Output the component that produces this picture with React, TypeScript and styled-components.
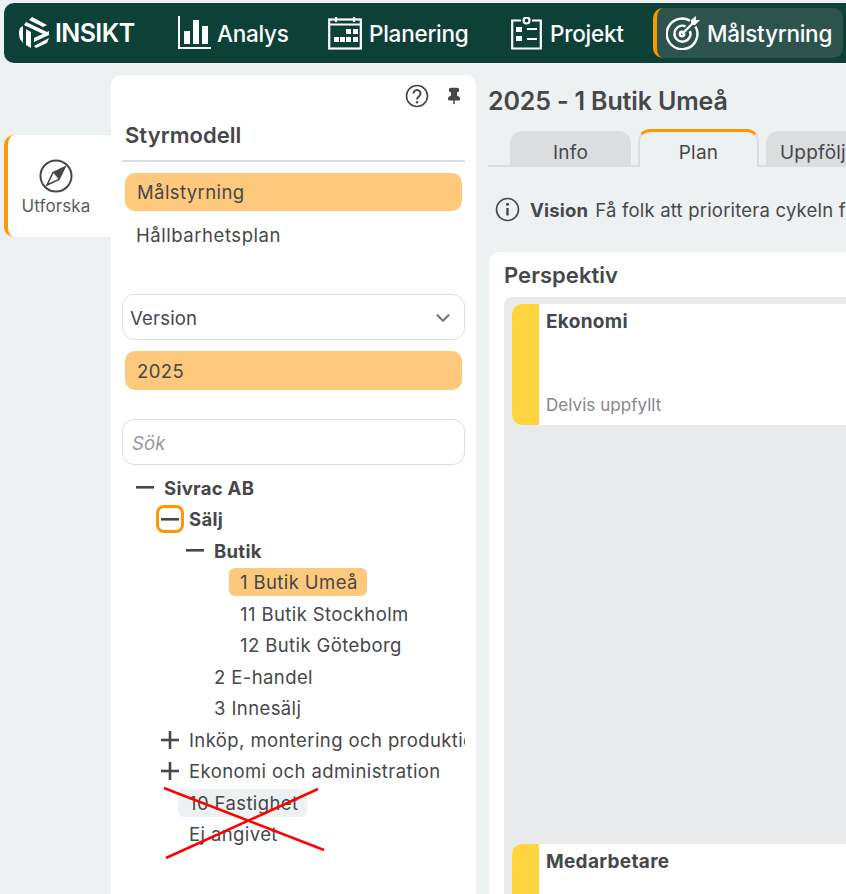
import React from 'react';
import styled, { createGlobalStyle } from 'styled-components';
import { ChevronDown, Pin } from 'lucide-react';

const ink = '#45474a';
const accent = '#ff9800';
const soft = '#fec97c';

const Global = createGlobalStyle`
    html, body {
        margin: 0;
        height: 100%;
        background: #eef1f2;
        overflow: hidden;
    }
    body {
        font-family: Inter, "Noto Sans", sans-serif;
        color: ${ink};
    }
    * { box-sizing: border-box; }
    svg { flex: none; }
`;

const Page = styled.div`
    width: 846px;
    height: 894px;
    padding-top: 3px;
    overflow: hidden;
`;

const Header = styled.header`
    display: flex;
    align-items: center;
    height: 60px;
    margin-left: 4px;
    padding-left: 14px;
    background: #0d4036;
    border-radius: 10px 0 0 10px;
    color: #fff;
`;

const Brand = styled.div`
    display: flex;
    align-items: center;
    gap: 5px;
    width: 159px;
    font-size: 25px;
    font-weight: 600;
    letter-spacing: -0.6px;
`;

const NavItem = styled.div<{ $width: number; $gap: number; $active?: boolean }>`
    display: flex;
    align-items: center;
    gap: ${p => p.$gap}px;
    width: ${p => p.$width}px;
    height: 50px;
    font-size: 22.5px;
    font-weight: 500;
    letter-spacing: -0.25px;
    white-space: nowrap;
    ${p => p.$active && `
        padding-left: 9px;
        background: #2c544d;
        border-left: 4px solid ${accent};
        border-radius: 10px;
    `}
`;

const Main = styled.main`
    display: flex;
    height: 831px;
    margin-top: 12px;
`;

const Rail = styled.nav`
    flex: none;
    width: 107px;
    margin-left: 4px;
    padding-top: 60px;
`;

const RailTab = styled.div`
    display: flex;
    flex-direction: column;
    align-items: center;
    gap: 3px;
    height: 102px;
    padding: 24px 7px 0 0;
    background: #fff;
    border-left: 4px solid ${accent};
    border-radius: 10px 0 0 10px;
    font-size: 17px;
    letter-spacing: 0.1px;
    color: #5a5c60;
`;

const Panel = styled.aside`
    flex: none;
    width: 365px;
    padding: 9px 11px 0;
    background: #fff;
    border-radius: 10px 10px 0 0;
`;

const PanelTools = styled.div`
    display: flex;
    justify-content: flex-end;
    align-items: center;
    gap: 16px;
    height: 24px;
    padding-right: 2px;
`;

const PanelTitle = styled.h2`
    margin: 13px 0 11px;
    height: 41px;
    padding-left: 3px;
    font-size: 22px;
    line-height: 28px;
    font-weight: 600;
    letter-spacing: 0.05px;
    border-bottom: 2px solid #dcdddf;
`;

const Pill = styled.div<{ $height: number }>`
    display: flex;
    align-items: center;
    height: ${p => p.$height}px;
    margin: 0 3px;
    padding-left: 12px;
    background: ${soft};
    border-radius: 10px;
    font-size: 18.5px;
    letter-spacing: 0.4px;
`;

const MenuItem = styled.div`
    display: flex;
    align-items: center;
    height: 38px;
    margin: 5px 3px 40px;
    padding-left: 11px;
    font-size: 18.5px;
    letter-spacing: 0.55px;
`;

const Field = styled.div<{ $muted?: boolean }>`
    display: flex;
    align-items: center;
    justify-content: space-between;
    height: 46px;
    padding: 1px 10px 0 7px;
    border: 1.5px solid #dcdddf;
    border-radius: 12px;
    font-size: 18.5px;
    letter-spacing: 0.2px;
    ${p => p.$muted && `
        padding-left: 9px;
        color: #96989c;
        font-style: italic;
    `}
`;

const FieldGap = styled.div<{ $height: number }>`
    height: ${p => p.$height}px;
`;

const Tree = styled.div`
    position: relative;
    margin-top: 7px;
`;

const Row = styled.div<{ $depth: number }>`
    display: flex;
    align-items: center;
    height: 31.5px;
    padding-left: ${p => p.$depth}px;
    overflow: hidden;
    white-space: nowrap;
    width: 343px;
    font-size: 18.5px;
    letter-spacing: 0.4px;
`;

const Toggle = styled.span<{ $focus?: boolean }>`
    display: flex;
    align-items: center;
    justify-content: center;
    flex: none;
    width: 28px;
    height: 28px;
    margin-right: 5px;
    border-radius: 8px;
    ${p => p.$focus && `border: 3px solid ${accent};`}
`;

const Label = styled.span<{ $bold?: boolean; $bg?: string }>`
    font-weight: ${p => (p.$bold ? 700 : 400)};
    ${p => p.$bold && 'letter-spacing: 0.3px;'}
    ${p => p.$bg && `
        margin-left: -11px;
        padding: 3px 9px 3px 11px;
        background: ${p.$bg};
        border-radius: 6px;
    `}
`;

const Cross = styled.svg`
    position: absolute;
    left: 41px;
    top: 315px;
    pointer-events: none;
`;

const Content = styled.section`
    flex: none;
    width: 370px;
    padding-left: 12px;
`;

const Title = styled.h1`
    margin: 0;
    height: 54px;
    padding-top: 11px;
    font-size: 25px;
    line-height: 30px;
    font-weight: 600;
    letter-spacing: -0.15px;
    white-space: nowrap;
`;

const Tabs = styled.div`
    display: flex;
    align-items: flex-end;
    gap: 7px;
    height: 38px;
    padding-left: 22px;
    border-bottom: 2px solid #dcdddf;
`;

const Tab = styled.div<{ $active?: boolean }>`
    flex: none;
    min-width: 121px;
    height: ${p => (p.$active ? 38 : 34)}px;
    margin-bottom: ${p => (p.$active ? -2 : 0)}px;
    padding: ${p => (p.$active ? 6 : 8)}px 14px 0;
    display: flex;
    align-items: center;
    justify-content: center;
    background: ${p => (p.$active ? '#eef1f2' : '#dcdddf')};
    border-radius: 12px 12px 0 0;
    font-size: 19px;
    letter-spacing: 0.2px;
    ${p => p.$active && `
        border: 2px solid #dcdddf;
        border-top: 3px solid ${accent};
        border-bottom: none;
    `}
`;

const Vision = styled.div`
    display: flex;
    align-items: center;
    gap: 10px;
    height: 85px;
    padding-left: 7px;
    font-size: 18.5px;
    letter-spacing: 0.2px;
    white-space: nowrap;
    overflow: hidden;
    strong { font-weight: 700; margin-right: -3px; }
`;

const Card = styled.div`
    margin-left: 1px;
    height: 700px;
    padding: 9px 0 0 15px;
    background: #fff;
    border-radius: 10px 0 0 0;
`;

const CardTitle = styled.h2`
    margin: 0 0 6px;
    height: 30px;
    font-size: 22px;
    line-height: 29px;
    font-weight: 600;
    letter-spacing: 0.05px;
`;

const Lane = styled.div`
    display: flex;
    flex-direction: column;
    gap: 419px;
    height: 640px;
    padding: 7px 0 0 8px;
    background: #e9eaec;
    border-radius: 8px 0 0 0;
`;

const Perspective = styled.div`
    display: flex;
    flex: none;
    height: 121px;
    background: #fff;
    border-radius: 10px 0 0 10px;
`;

const Strip = styled.div`
    flex: none;
    width: 27px;
    background: #ffd53f;
    border-radius: 10px 0 0 10px;
`;

const PerspectiveBody = styled.div`
    flex: 1;
    display: flex;
    flex-direction: column;
    justify-content: space-between;
    padding: 5px 0 8px 7px;
`;

const PerspectiveName = styled.div`
    font-size: 19px;
    line-height: 25px;
    font-weight: 700;
    letter-spacing: 0.3px;
`;

const Status = styled.div`
    font-size: 17px;
    line-height: 24px;
    color: #85878b;
    letter-spacing: 0.05px;
`;

const Logo = () => (
    <svg width="32" height="32" viewBox="0 0 32 32" fill="#fff">
        <path d="M14 0 L29 8 L25 10 L11 3 Z" />
        <path d="M8 5 L29 15 L25 17 L6 8 Z" />
        <path d="M2 11 L5 9 L5 26 L2 22 Q0 16 2 11 Z" />
        <path d="M8 12 L13 15 L13 31 L8 28 Z" />
        <path d="M16 21 L31 14 L31 18 L16 25 Z" />
        <path d="M16 29 L31 21 L29 26 L18 31 Z" />
    </svg>
);

const ChartIcon = () => (
    <svg width="34" height="34" viewBox="0 0 34 34" fill="#fff">
        <path d="M1 0h2v31h31v2H1z" />
        <rect x="7" y="15" width="6" height="13" />
        <rect x="16" y="4" width="6" height="24" />
        <rect x="25" y="10" width="6" height="18" />
    </svg>
);

const CalendarIcon = () => (
    <svg width="34" height="34" viewBox="0 0 34 34" fill="none" stroke="#fff" strokeWidth="2.2">
        <rect x="1.2" y="3.5" width="31.6" height="29" />
        <path d="M1 8.5h32M8 1v5M26 1v5" />
        <g fill="#fff" stroke="none">
            <rect x="18" y="13" width="5" height="5" />
            <rect x="25" y="13" width="5" height="5" />
            <rect x="6" y="21" width="5" height="5" />
            <rect x="12" y="21" width="5" height="5" />
            <rect x="18" y="21" width="5" height="5" />
            <rect x="25" y="21" width="5" height="5" />
        </g>
    </svg>
);

const ClipboardIcon = () => (
    <svg width="31" height="33" viewBox="0 0 31 33" fill="none" stroke="#fff" strokeWidth="2.2">
        <path d="M10 3.5H1.2v28h28.6v-28H21" />
        <circle cx="15.5" cy="3.5" r="3" />
        <path d="M16 12h10M16 22h10" />
        <rect x="5" y="10" width="6" height="5" fill="#fff" stroke="none" />
        <rect x="5" y="19" width="6" height="5" fill="#fff" stroke="none" />
    </svg>
);

const TargetIcon = () => (
    <svg width="34" height="34" viewBox="0 0 34 34" fill="none" stroke="#fff" strokeWidth="2.4">
        <path d="M24 4.8A15.3 15.3 0 1 0 29.5 10.5" />
        <path d="M19.5 10.3A8 8 0 1 0 24 15" />
        <circle cx="16" cy="18" r="2.2" />
        <path d="M16 18 L29 5" />
        <path d="M25 9 L25 4 L30 0 L30 4 L34 4 L29 9 Z" fill="#fff" stroke="none" />
    </svg>
);

const CompassIcon = () => (
    <svg width="34" height="34" viewBox="0 0 34 34" fill="none">
        <circle cx="17" cy="17" r="15.5" stroke="#45474a" strokeWidth="2" />
        <path d="M26 8 L14 13.5 L8 26 L20 20.5 Z" fill="#fff" stroke="#45474a" strokeWidth="1.6" />
        <path d="M26 8 L14 13.5 L20 20.5 Z" fill="#45474a" />
    </svg>
);

const HelpIcon = () => (
    <svg width="24" height="24" viewBox="0 0 24 24" fill="none" stroke="#45474a" strokeWidth="1.6">
        <circle cx="12" cy="12" r="10.5" />
        <path d="M8.5 9.5a3.5 3.5 0 1 1 5.6 2.8c-1.3 1-2.1 1.6-2.1 3.2" strokeWidth="2" />
        <circle cx="12" cy="18.3" r="1.2" fill="#45474a" stroke="none" />
    </svg>
);

const InfoIcon = () => (
    <svg width="25" height="25" viewBox="0 0 25 25" fill="none" stroke="#45474a" strokeWidth="1.6">
        <circle cx="12.5" cy="12.5" r="11" />
        <path d="M12.5 11v7.5" strokeWidth="2.4" />
        <circle cx="12.5" cy="7.2" r="1.5" fill="#45474a" stroke="none" />
    </svg>
);

const Minus = () => (
    <svg width="18" height="3" viewBox="0 0 18 3"><rect width="18" height="2.6" fill="#45474a" /></svg>
);

const Plus = () => (
    <svg width="18" height="18" viewBox="0 0 18 18" fill="#45474a">
        <rect y="7.7" width="18" height="2.6" />
        <rect x="7.7" width="2.6" height="18" />
    </svg>
);

type Node = {
    label: string;
    depth: number;
    toggle?: 'minus' | 'plus';
    focus?: boolean;
    bold?: boolean;
    bg?: string;
};

const nodes: Node[] = [
    { label: 'Sivrac AB', depth: 9, toggle: 'minus', bold: true },
    { label: 'Sälj', depth: 34, toggle: 'minus', focus: true, bold: true },
    { label: 'Butik', depth: 59, toggle: 'minus', bold: true },
    { label: '1 Butik Umeå', depth: 118, bg: soft },
    { label: '11 Butik Stockholm', depth: 118 },
    { label: '12 Butik Göteborg', depth: 118 },
    { label: '2 E-handel', depth: 92 },
    { label: '3 Innesälj', depth: 92 },
    { label: 'Inköp, montering och produktion', depth: 34, toggle: 'plus' },
    { label: 'Ekonomi och administration', depth: 34, toggle: 'plus' },
    { label: '10 Fastighet', depth: 67, bg: '#eef1f2' },
    { label: 'Ej angivet', depth: 67 },
];

export default function App() {
    return (
        <Page>
            <Global />
            <Header>
                <Brand><Logo />INSIKT</Brand>
                <NavItem $width={151} $gap={6}><ChartIcon />Analys</NavItem>
                <NavItem $width={183} $gap={7}><CalendarIcon />Planering</NavItem>
                <NavItem $width={142} $gap={8}><ClipboardIcon />Projekt</NavItem>
                <NavItem $width={190} $gap={7} $active><TargetIcon />Målstyrning</NavItem>
            </Header>
            <Main>
                <Rail>
                    <RailTab><CompassIcon />Utforska</RailTab>
                </Rail>
                <Panel>
                    <PanelTools>
                        <HelpIcon />
                        <Pin size={18} color="#45474a" fill="#45474a" />
                    </PanelTools>
                    <PanelTitle>Styrmodell</PanelTitle>
                    <Pill $height={38}>Målstyrning</Pill>
                    <MenuItem>Hållbarhetsplan</MenuItem>
                    <Field>Version<ChevronDown size={22} strokeWidth={2.4} color="#77797d" /></Field>
                    <FieldGap $height={11} />
                    <Pill $height={39}>2025</Pill>
                    <FieldGap $height={29} />
                    <Field $muted>Sök</Field>
                    <Tree>
                        {nodes.map(n => (
                            <Row key={n.label} $depth={n.depth}>
                                {n.toggle && (
                                    <Toggle $focus={n.focus}>
                                        {n.toggle === 'minus' ? <Minus /> : <Plus />}
                                    </Toggle>
                                )}
                                <Label $bold={n.bold} $bg={n.bg}>{n.label}</Label>
                            </Row>
                        ))}
                        <Cross width="170" height="80" viewBox="0 0 170 80" fill="none" stroke="#ff0000" strokeWidth="2.5">
                            <path d="M1 1 L161 63" />
                            <path d="M3 71 L155 2" />
                        </Cross>
                    </Tree>
                </Panel>
                <Content>
                    <Title>2025 - 1 Butik Umeå</Title>
                    <Tabs>
                        <Tab>Info</Tab>
                        <Tab $active>Plan</Tab>
                        <Tab>Uppföljning</Tab>
                    </Tabs>
                    <Vision>
                        <InfoIcon />
                        <strong>Vision</strong>
                        Få folk att prioritera cykeln framför bilen
                    </Vision>
                    <Card>
                        <CardTitle>Perspektiv</CardTitle>
                        <Lane>
                            <Perspective>
                                <Strip />
                                <PerspectiveBody>
                                    <PerspectiveName>Ekonomi</PerspectiveName>
                                    <Status>Delvis uppfyllt</Status>
                                </PerspectiveBody>
                            </Perspective>
                            <Perspective>
                                <Strip />
                                <PerspectiveBody>
                                    <PerspectiveName>Medarbetare</PerspectiveName>
                                </PerspectiveBody>
                            </Perspective>
                        </Lane>
                    </Card>
                </Content>
            </Main>
        </Page>
    );
}
